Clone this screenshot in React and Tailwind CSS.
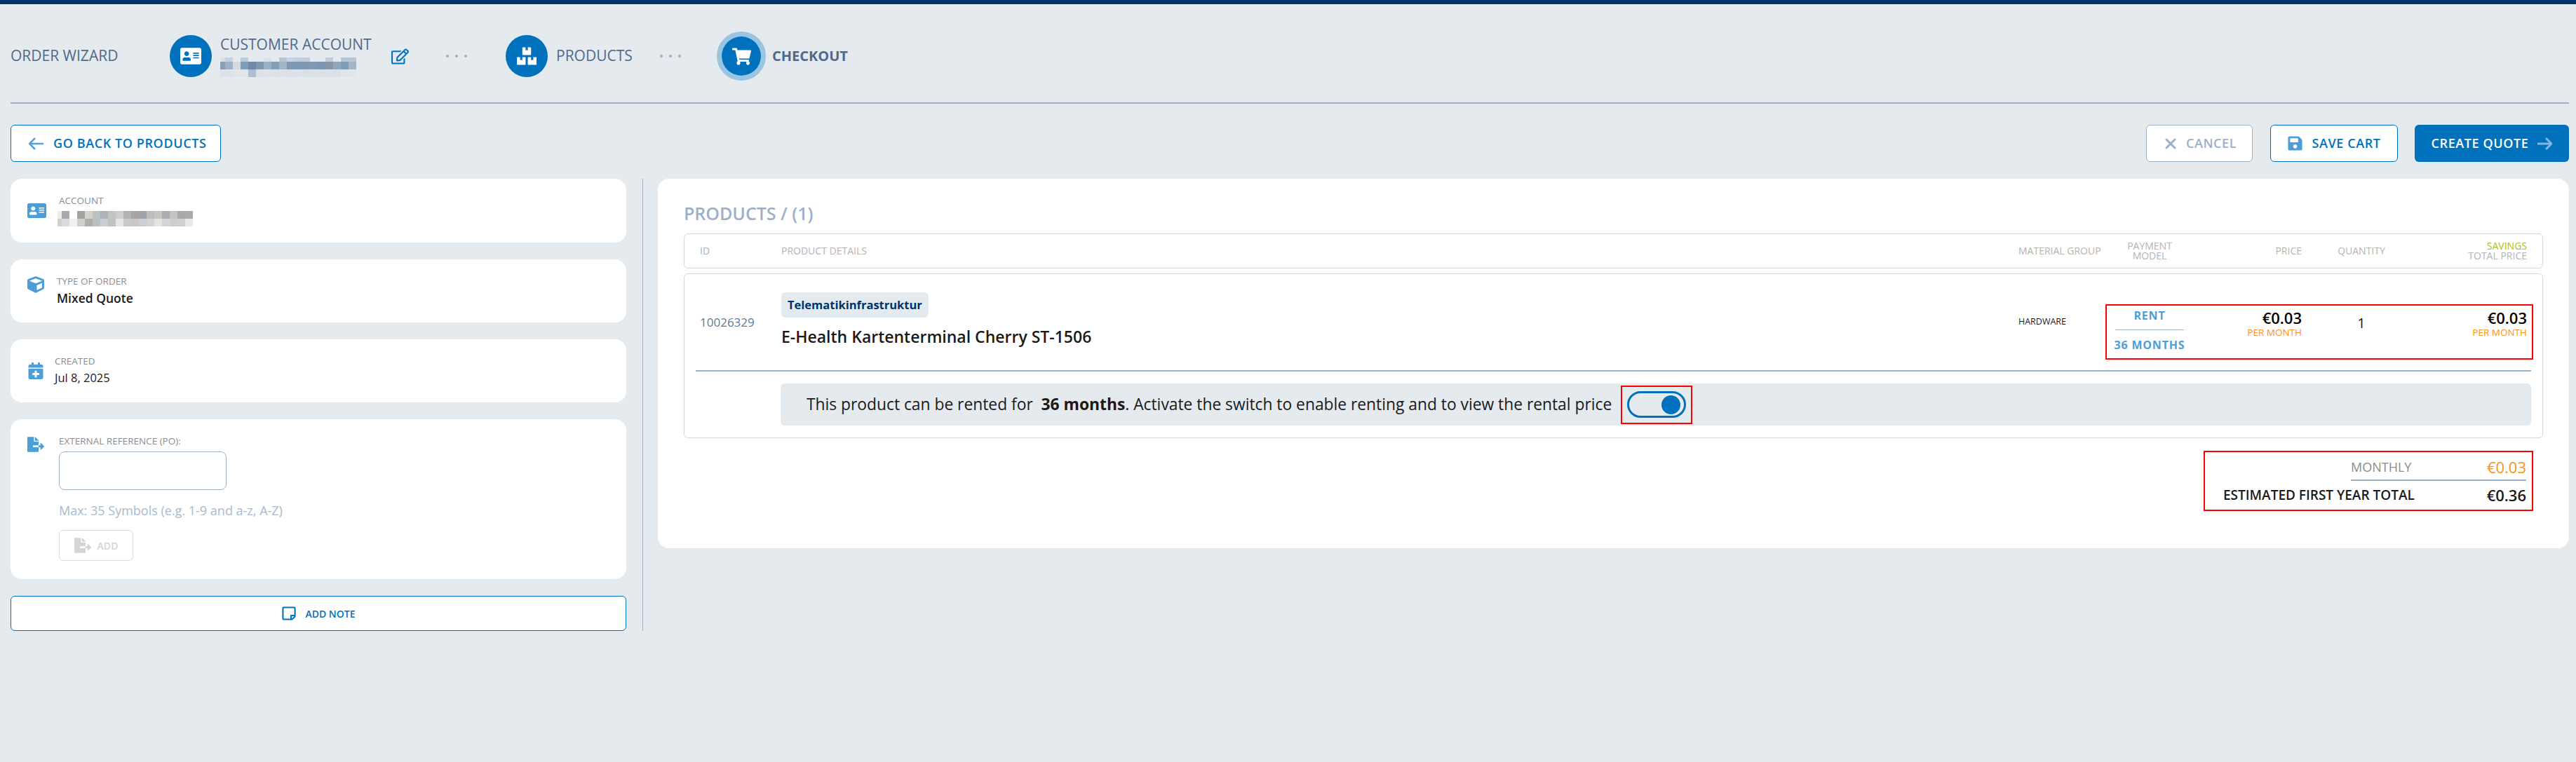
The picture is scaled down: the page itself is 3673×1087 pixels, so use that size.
import React from 'react';
import { X } from 'lucide-react';
import {
  FaAddressCard, FaBoxes, FaShoppingCart, FaRegEdit, FaCube, FaCalendarPlus,
  FaFileExport, FaSave, FaRegStickyNote,
} from 'react-icons/fa';

const headerMosaic = [
  ['#dcdfe4', '#c5d3e0', '#e5eaee', '#bccbd9', '#e5eaee', '#e5eaee', '#dde2e7', '#e5eaee', '#b7c5d3', '#c9d4e2', '#c3cfdc', '#c3ced9', '#e5eaee', '#e5eaee', '#c3cdd7', '#e5eaee', '#b7c6d6', '#b7c6d6'],
  ['#8a9fb4', '#9db2c6', '#d3d9e1', '#7f9eb9', '#6e8aa5', '#7f9ab0', '#9cb0c2', '#7f9fba', '#a3b4c5', '#7f99b2', '#7b99b5', '#8099b1', '#809ab2', '#7a96b1', '#8896a8', '#8fa6bc', '#7f9db8', '#a3b5c6'],
  ['#dde2e9', '#dde2e9', '#e0e5ea', '#dfe5e8', '#adbfd0', '#dce1e8', '#dde3e9', '#dbe1e7', '#dce2e8', '#dbe1e8', '#dbe2e9', '#d9e1e8', '#dae2e8', '#dbe1e8', '#dbe1e8', '#dce1e8', '#e0e5ea', '#e0e5eb'],
];

const accountMosaic = [
  ['#f0ece6', '#a6a9b0', '#ffffff', '#a3a3a3', '#d5d1cd', '#bcc1c1', '#aeb3b9', '#c3c3c4', '#cfcecc', '#afb3b2', '#aaa3a0', '#a0a3ae', '#bfbdba', '#c6c4c1', '#a9acb1', '#c3c3c3', '#aba8a7', '#a9a9b0'],
  ['#d0d0ce', '#d9dcdb', '#f0f0ee', '#cfcfce', '#b0adab', '#b8c0c2', '#c9ccd0', '#c1c2c4', '#e6e6e4', '#cbcac8', '#c8c8c5', '#ccced2', '#d2d4d4', '#e4e4e2', '#d3d5dc', '#d0cecc', '#cfd0d2', '#e9e9e9'],
];

// pixelated customer data, blurred in the picture. first column / row are cut off
function Mosaic({ rows, width, height, offsetX, offsetY = 0 }) {
  return (
    <svg width={width} height={height} shapeRendering="crispEdges" className="block">
      {rows.map((row, y) =>
        row.map((color, x) => (
          <rect key={x} x={x * 11 - offsetX} y={y * 11 - offsetY} width={11} height={11} fill={color} />
        ))
      )}
    </svg>
  );
}

function LongArrow({ flip, strokeWidth = 2.5, className }) {
  return (
    <svg width="22" height="20" viewBox="0 0 22 20" fill="none" stroke="currentColor" strokeWidth={strokeWidth} className={className}>
      {flip ? <path d="M13 2 L21 10 L13 18 M21 10 H1" /> : <path d="M9 2 L1 10 L9 18 M1 10 H21" />}
    </svg>
  );
}

function Step({ icon: Icon, size = 30, active, children }) {
  return (
    <div className="flex items-center">
      <div className={active ? 'rounded-full border-[7px] border-[#99c5e3]' : ''}>
        <div className={`flex items-center justify-center rounded-full bg-[#0071bc] text-white ${active ? 'w-[56px] h-[56px]' : 'w-[60px] h-[60px]'}`}>
          <Icon size={size} />
        </div>
      </div>
      {children}
    </div>
  );
}

function Dots() {
  return (
    <div className="flex gap-[9px] w-[30px]">
      <span className="w-1 h-1 rounded-full bg-[#9db0c5]" />
      <span className="w-1 h-1 rounded-full bg-[#9db0c5]" />
      <span className="w-1 h-1 rounded-full bg-[#9db0c5]" />
    </div>
  );
}

function InfoCard({ icon, children, className = '' }) {
  return <div className={`flex bg-white rounded-[16px] pl-[24px] pt-[23px] ${className}`}>{icon}{children}</div>;
}

function Label({ children }) {
  return <div className="text-[13.5px] leading-[16px] text-[#8c8c8c]">{children}</div>;
}

export default function App() {
  return (
    <div className="min-h-screen bg-[#e5eaee] font-['Open_Sans',sans-serif] text-[#1a1a1a]">
      <div className="h-[6px] bg-[#00336a]" />

      <div className="ml-[15px] mr-[10px] border-b-2 border-[#9db0c5] h-[142px] flex items-center text-[#50698a] pt-[8px]">
        <span className="w-[227px] text-[21px]">ORDER WIZARD</span>
        <Step icon={FaAddressCard}>
          <div className="ml-[12px] w-[244px]">
            <div className="text-[21px] leading-[26px] h-[32px] whitespace-nowrap">CUSTOMER ACCOUNT</div>
            <Mosaic rows={headerMosaic} width={194} height={28} offsetX={4} offsetY={5} />
          </div>
        </Step>
        <FaRegEdit size={25} className="text-[#0071bc] mr-[53px]" />
        <Dots />
        <div className="w-[55px]" />
        <Step icon={FaBoxes} size={28}>
          <span className="ml-[12px] text-[21px] w-[148px]">PRODUCTS</span>
        </Step>
        <Dots />
        <div className="w-[51px]" />
        <Step icon={FaShoppingCart} size={27} active>
          <span className="ml-[9px] text-[20px] font-bold">CHECKOUT</span>
        </Step>
      </div>

      <div className="flex mt-[30px] ml-[15px] mr-[10px] h-[53px] text-[18px] font-semibold tracking-[0.6px]">
        <button className="flex items-center w-[300px] pl-[25px] bg-white border border-[#0071bc] rounded-[6px] text-[#0071bc]">
          <LongArrow className="text-[#5aa0d6] mr-[13px]" />
          GO BACK TO PRODUCTS
        </button>
        <div className="flex-1" />
        <button className="flex items-center justify-center w-[152px] bg-white border border-[#9db0c5] rounded-[6px] text-[#9db0c8]">
          <X size={24} strokeWidth={3} className="mr-[10px]" />
          CANCEL
        </button>
        <button className="flex items-center justify-center w-[182px] ml-[25px] bg-white border border-[#0071bc] rounded-[6px] text-[#0071bc]">
          <FaSave size={23} className="text-[#4c9fd6] mr-[12px]" />
          SAVE CART
        </button>
        <button className="flex items-center justify-center w-[220px] ml-[24px] bg-[#0071bc] rounded-[6px] text-white">
          CREATE QUOTE
          <LongArrow flip strokeWidth={3} className="text-[#7fb8e0] ml-[12px]" />
        </button>
      </div>

      <div className="flex mt-[24px] ml-[15px] mr-[10px]">
        <div className="w-[878px] flex flex-col gap-[24px]">
          <InfoCard className="h-[91px]" icon={<FaAddressCard size={27} className="text-[#4c9fd6] mt-[9px] mr-[18px]" />}>
            <div>
              <Label>ACCOUNT</Label>
              <div className="mt-[7px] -ml-[2px]">
                <Mosaic rows={accountMosaic} width={193} height={22} offsetX={5} />
              </div>
            </div>
          </InfoCard>
          <InfoCard className="h-[90px]" icon={<FaCube size={24} className="text-[#4c9fd6] mt-[1px] mr-[18px]" />}>
            <div>
              <Label>TYPE OF ORDER</Label>
              <div className="mt-[5px] text-[17.5px] leading-[22px] font-semibold">Mixed Quote</div>
            </div>
          </InfoCard>
          <InfoCard className="h-[90px]" icon={<FaCalendarPlus size={24} className="text-[#4c9fd6] mt-[10px] mr-[15px]" />}>
            <div>
              <Label>CREATED</Label>
              <div className="mt-[5px] text-[16.5px] leading-[22px]">Jul 8, 2025</div>
            </div>
          </InfoCard>
          <InfoCard className="h-[228px]" icon={<FaFileExport size={24} className="text-[#4c9fd6] mt-[1px] mr-[21px]" />}>
            <div>
              <Label>EXTERNAL REFERENCE (PO):</Label>
              <div className="mt-[7px] w-[239px] h-[55px] border border-[#9db0c5] rounded-[8px]" />
              <div className="mt-[18px] text-[18px] leading-[22px] text-[#a9bacd]">Max: 35 Symbols (e.g. 1-9 and a-z, A-Z)</div>
              <button className="mt-[17px] flex items-center justify-center w-[106px] h-[44px] border border-[#dddddd] rounded-[6px] text-[14px] font-semibold text-[#d4d4d4]">
                <FaFileExport size={24} className="mr-[9px]" />
                ADD
              </button>
            </div>
          </InfoCard>
          <button className="flex items-center justify-center h-[50px] bg-white border border-[#0071bc] rounded-[6px] text-[14px] font-semibold text-[#0071bc]">
            <FaRegStickyNote size={22} className="mr-[12px]" />
            ADD NOTE
          </button>
        </div>

        <div className="w-px bg-[#9db0c5] ml-[23px] h-[645px]" />

        <div className="flex flex-col ml-[21px] flex-1 h-[527px] bg-white rounded-[16px] pl-[37px] pr-[37px] pt-[33px]">
          <div className="text-[25px] leading-[32px] font-semibold text-[#9db0c8]">PRODUCTS / (1)</div>

          <div className="flex items-center h-[50px] mt-[13px] border border-[#d5d8dc] rounded-[6px] pl-[22px] text-[14px] leading-[14px] text-[#b3b3b3]">
            <div className="w-[116px]">ID</div>
            <div className="flex-1">PRODUCT DETAILS</div>
            <div className="w-[124px]">MATERIAL GROUP</div>
            <div className="w-[126px] text-center">PAYMENT<br />MODEL</div>
            <div className="w-[154px] text-right">PRICE</div>
            <div className="w-[170px] text-center">QUANTITY</div>
            <div className="w-[151px] text-right"><span className="text-[#a5c026]">SAVINGS</span><br />TOTAL PRICE</div>
            <div className="w-[22px]" />
          </div>

          <div className="mt-[7px] h-[235px] border border-[#d5d8dc] rounded-[6px]">
            <div className="flex items-center h-[137px] ml-[22px]">
              <div className="w-[116px] text-[17px] text-[#5f7a94]">10026329</div>
              <div className="flex-1 self-start pt-[26px]">
                <span className="inline-block h-[36px] leading-[36px] px-[9px] rounded-[6px] bg-[#e5eaee] text-[16.5px] font-bold text-[#00336a]">Telematikinfrastruktur</span>
                <div className="mt-[12px] text-[23px] leading-[30px] font-semibold">E-Health Kartenterminal Cherry ST-1506</div>
              </div>
              <div className="w-[124px] text-[12.5px]">HARDWARE</div>
              <div className="flex self-start mt-[43px] mr-[13px] h-[79px] border-2 border-[#ff0000]">
                <div className="w-[122px] flex flex-col items-center text-[16px] font-bold tracking-[0.8px] text-[#4c9fd6]">
                  <div className="leading-[24px] mt-[2px]">RENT</div>
                  <div className="w-[98px] h-px mt-[8px] bg-[#9db0c5]" />
                  <div className="leading-[24px] mt-[9px]">36 MONTHS</div>
                </div>
                <div className="w-[156px] text-right">
                  <div className="text-[22px] leading-[24px] mt-[5px] font-semibold text-black">€0.03</div>
                  <div className="text-[13.5px] leading-[16px] mt-[1px] text-[#f7931e]">PER MONTH</div>
                </div>
                <div className="w-[170px] text-center text-[20px] leading-[24px] mt-[13px]">1</div>
                <div className="w-[151px] mr-[7px] text-right">
                  <div className="text-[22px] leading-[24px] mt-[5px] font-semibold text-black">€0.03</div>
                  <div className="text-[13.5px] leading-[16px] mt-[1px] text-[#f7931e]">PER MONTH</div>
                </div>
              </div>
            </div>
            <div className="h-[2px] bg-[#9db0c5] ml-[16px] mr-[16px]" />
            <div className="flex items-center h-[60px] mt-[17px] ml-[137px] mr-[16px] pl-[37px] bg-[#e5eaee] rounded-[6px] text-[22.8px]">
              <span className="whitespace-nowrap">This product can be rented for&nbsp; <b>36 months</b>. Activate the switch to enable renting and to view the rental price</span>
              <div className="flex items-center justify-center ml-[13px] w-[102px] h-[55px] border-2 border-[#ff0000]">
                <div className="flex items-center justify-end w-[84px] h-[38px] pr-[5px] rounded-full border-[3px] border-[#0071bc]">
                  <div className="w-[27px] h-[27px] rounded-full bg-[#0071bc]" />
                </div>
              </div>
            </div>
          </div>

          <div className="self-end mt-[18px] mr-[14px] w-[470px] h-[86px] border-2 border-[#ff0000] pr-[8px]">
            <div className="flex justify-end items-center h-[38px] mt-[3px] ml-[208px] border-b-2 border-[#9db0c5]">
              <span className="text-[18px] text-[#8c8c8c] mr-auto">MONTHLY</span>
              <span className="text-[22px] text-[#f7931e]">€0.03</span>
            </div>
            <div className="flex items-center h-[36px] mt-[2px] pl-[26px]">
              <span className="text-[19px] font-semibold w-[272px] whitespace-nowrap">ESTIMATED FIRST YEAR TOTAL</span>
              <span className="flex-1 text-right text-[22px] font-semibold">€0.36</span>
            </div>
          </div>
        </div>
      </div>
    </div>
  );
}
